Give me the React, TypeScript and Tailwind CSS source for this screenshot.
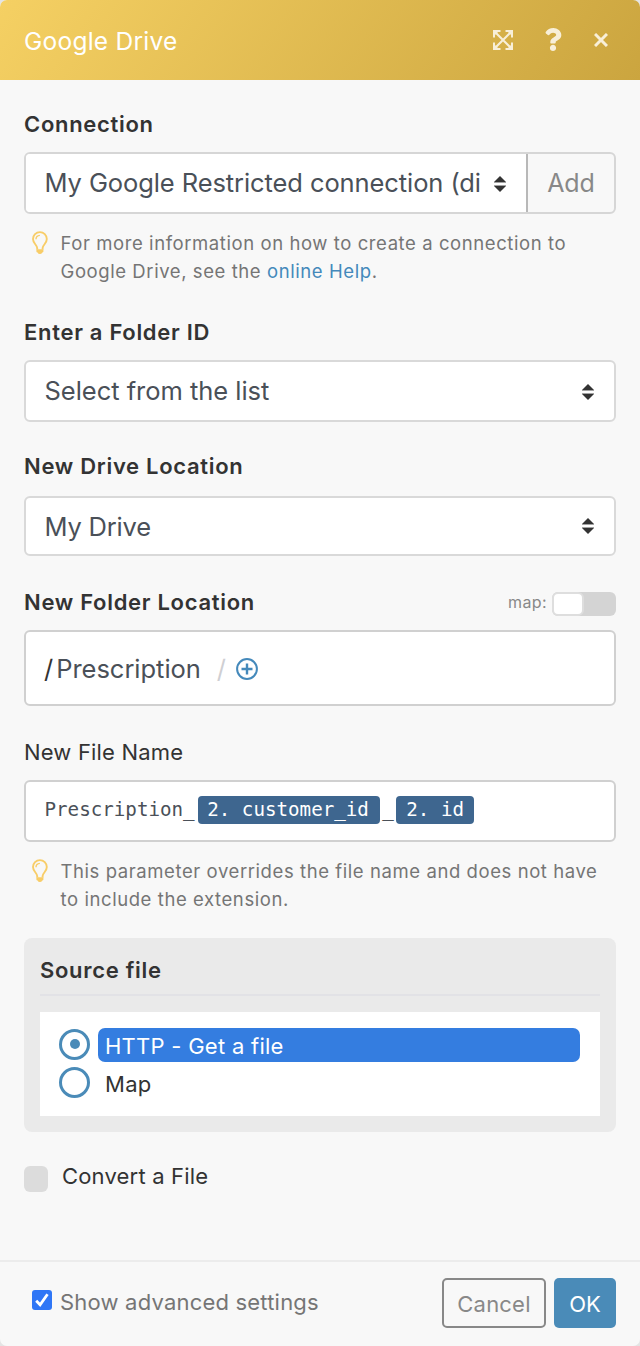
import { ReactNode } from "react";
import { FaQuestion } from "react-icons/fa";

function Carets() {
  return (
    <svg className="shrink-0" width="14" height="16" viewBox="0 0 14 16" fill="#333333">
      <path d="M7 0 13 6H1Z" />
      <path d="M1 6h12v1H1zM1 9h12v1H1z" fill="#a3a3a3" />
      <path d="M1 10h12L7 16Z" />
    </svg>
  );
}

function Bulb() {
  return (
    <svg className="mt-[1.5px] ml-[6.5px] shrink-0" width="18" height="24" viewBox="0 0 18 24" fill="none" stroke="#f8cd68">
      <path
        d="M6.2 18.4V17C5.8 13.6 2 12.4 2 8a6.9 6.9 0 0 1 13.8 0c0 4.4-3.8 5.6-4.2 9v1.4"
        strokeWidth="1.9"
      />
      <path d="M5 8.2c0-2.2 1.6-3.6 3.9-3.8" strokeWidth="1.4" />
      <path d="M5.4 18.2h7v2.3q0 .8-.7.9h-.6q-.3 1.5-2.2 1.5T6.7 21.4h-.6q-.7-.1-.7-.9z" fill="#f8cd68" stroke="none" />
    </svg>
  );
}

function Label({ children, bold = true }: { children: ReactNode; bold?: boolean }) {
  return (
    <span
      className={
        bold
          ? "text-[22px] leading-7 font-semibold tracking-[0.7px] text-[#333]"
          : "text-[22px] leading-7 tracking-[0.18px] text-[#333]"
      }
    >
      {children}
    </span>
  );
}

function Hint({ children }: { children: ReactNode }) {
  return (
    <div className="flex h-14 text-[18.5px] leading-7 tracking-[0.58px] text-[#757575]">
      <Bulb />
      <p className="ml-[12px] whitespace-nowrap">{children}</p>
    </div>
  );
}

export default function App() {
  return (
    <div className="h-[1346px] w-[640px] bg-[#e4e4e4] font-['Inter',sans-serif]">
      <div className="flex h-full flex-col overflow-hidden rounded-[7px] bg-[#f8f8f8]">
        <header className="flex h-20 shrink-0 items-center bg-[linear-gradient(125deg,#f5d063_0%,#cba53f_100%)] pr-[32.5px] pl-6 text-[#f8efd8]">
          <h1 className="flex-1 pt-px text-[24.5px] leading-8 tracking-[0.25px] text-white">Google Drive</h1>
          <svg width="20" height="20" viewBox="0 0 20 20" fill="none" stroke="currentColor">
            <path d="M1 7.5V1h6.5M12.5 1H19v6.5M19 12.5V19h-6.5M7.5 19H1v-6.5" strokeWidth="2" />
            <path d="m2 2 16 16M18 2 2 18" strokeWidth="2" />
            <path d="M1 1h5L1 6zM19 1v5l-5-5zM19 19h-5l5-5zM1 19v-5l5 5z" fill="currentColor" stroke="none" />
          </svg>
          <FaQuestion className="mb-0.5 ml-[31px]" style={{ width: 18, height: 23 }} />
          <svg className="mb-px ml-[31.5px]" width="14" height="14" viewBox="0 0 14 14" fill="none" stroke="currentColor">
            <path d="m1 1 12 12M13 1 1 13" strokeWidth="3" />
          </svg>
        </header>

        <main className="flex h-[1180px] shrink-0 flex-col px-6 pt-[30px]">
          <Label>Connection</Label>
          <div className="mt-[14px] flex h-[62px] rounded-[6px] border-2 border-[#d6d6d6]">
            <div className="flex w-[502px] items-center rounded-l-[4px] border-r-2 border-[#b8b8b8] bg-white pl-[18.5px]">
              <span className="w-[448.5px] text-[25.5px] whitespace-nowrap tracking-[-0.09px] text-[#4a5058]">
                My Google Restricted connection (di
              </span>
              <span className="mt-0.5"><Carets /></span>
            </div>
            <div className="flex flex-1 items-center justify-center pt-0.5 text-[25px] tracking-[-0.1px] text-[#888]">Add</div>
          </div>
          <div className="mt-[15px]">
            <Hint>
              For more information on how to create a connection to
              <br />
              Google Drive, see the <span className="text-[#4489bb]">online Help</span>.
            </Hint>
          </div>

          <div className="mt-[33px] flex"><Label>Enter a Folder ID</Label></div>
          <div className="mt-[14px] flex h-[62px] items-center justify-between rounded-[6px] border-2 border-[#d9d9d9] bg-white pr-[19px] pl-[18.5px] text-[25.5px] tracking-[-0.03px] text-[#4a5058]">
            Select from the list
            <span className="mt-0.5"><Carets /></span>
          </div>

          <div className="mt-[30px] flex"><Label>New Drive Location</Label></div>
          <div className="mt-4 flex h-[60px] items-center justify-between rounded-[6px] border-2 border-[#d9d9d9] bg-white pr-[19px] pl-[18.5px] text-[25.5px] tracking-[-0.2px] text-[#4a5058]">
            <span className="pt-0.5">My Drive</span>
            <Carets />
          </div>

          <div className="mt-8 flex items-center justify-between">
            <Label>New Folder Location</Label>
            <div className="flex items-center">
              <span className="mr-[5px] text-[16px] tracking-[0.4px] text-[#888]">map:</span>
              <div className="mt-1 flex h-6 w-16 rounded-[6px] bg-[#d4d4d4]">
                <div className="w-8 rounded-[6px] border-2 border-[#dedede] bg-white" />
              </div>
            </div>
          </div>
          <div className="mt-[14px] flex h-[76px] items-center rounded-[6px] border-2 border-[#d0d0d0] bg-white pt-0.5 pl-[18px] text-[25.5px] tracking-[-0.03px] text-[#4a5058]">
            <span className="text-[#333]">/</span>
            <span className="ml-[3px]">Prescription</span>
            <span className="ml-4 text-[#cfcfd3]">/</span>
            <svg className="ml-[10px]" width="22" height="22" viewBox="0 0 22 22" fill="none" stroke="#4489bb">
              <circle cx="11" cy="11" r="9.9" strokeWidth="2" />
              <path d="M11 5.5v11M5.5 11h11" strokeWidth="2.4" />
            </svg>
          </div>

          <div className="mt-8 flex"><Label bold={false}>New File Name</Label></div>
          <div className="mt-[14px] flex h-[62px] items-center rounded-[6px] border-2 border-[#d0d0d0] bg-white pb-0.5 pl-[18.5px] font-['DejaVu_Sans_Mono',monospace] text-[19.2px] leading-[26px] text-[#4a5058]">
            <span>Prescription_</span>
            <span className="ml-[3px] flex h-7 w-[182px] items-center rounded-[4px] bg-[#3e668f] pl-[9.5px] whitespace-nowrap text-white">2. customer_id</span>
            <span className="ml-[2.5px]">_</span>
            <span className="ml-[2px] flex h-7 w-[78px] items-center rounded-[4px] bg-[#3e668f] pl-[10.5px] whitespace-nowrap text-white">2. id</span>
          </div>
          <div className="mt-[15px]">
            <Hint>
              This parameter overrides the file name and does not have
              <br />
              to include the extension.
            </Hint>
          </div>

          <section className="mt-[25px] h-[194px] shrink-0 rounded-lg bg-[#eaeaea] px-4 pt-[18px]">
            <div className="flex h-10 border-b-2 border-[#e2e2e6]"><Label>Source file</Label></div>
            <div className="mt-4 flex h-[104px] flex-col bg-white pt-4 pr-5 pl-[19px] text-[22px] tracking-[0.27px] text-[#333]">
              <div className="flex h-[34px] items-center">
                <span className="mb-0.5 flex size-[31px] items-center justify-center rounded-full border-[3px] border-[#4a8bb8]">
                  <span className="size-[10px] rounded-full bg-[#4a8bb8]" />
                </span>
                <span className="ml-2 flex h-[34px] flex-1 items-center rounded-[7px] bg-[#347de0] pt-0.5 pl-[7px] text-white">HTTP - Get a file</span>
              </div>
              <div className="mt-1 flex h-[34px] items-center">
                <span className="mb-0.5 size-[31px] rounded-full border-[3px] border-[#4a8bb8]" />
                <span className="pt-0.5 pl-[15px]">Map</span>
              </div>
            </div>
          </section>

          <div className="mt-[30px] flex items-start">
            <span className="mt-1 h-[26px] w-6 rounded-[6px] bg-[#dcdcdc]" />
            <span className="ml-[14px] flex"><Label bold={false}>Convert a File</Label></span>
          </div>
        </main>

        <footer className="flex flex-1 items-start border-t-2 border-[#ececec] pt-4 pr-6 pl-8">
          <svg className="mt-3" width="20" height="20" viewBox="0 0 20 20" fill="none">
            <rect width="20" height="20" rx="3" fill="#2f76f6" />
            <path d="m4.2 10.8 3.9 4 7.4-10.5" stroke="white" strokeWidth="2.8" />
          </svg>
          <span className="mt-[10px] ml-2 flex-1 text-[22px] leading-7 tracking-[0.2px] text-[#757575]">
            Show advanced settings
          </span>
          <button className="h-[50px] w-[104px] rounded-[5px] border-2 border-[#888] pt-0.5 text-[22px] tracking-[0.2px] text-[#888]">Cancel</button>
          <button className="ml-2 h-[50px] w-[62px] rounded-[5px] bg-[#4a8bb8] pt-0.5 text-[22px] text-white">OK</button>
        </footer>
      </div>
    </div>
  );
}
